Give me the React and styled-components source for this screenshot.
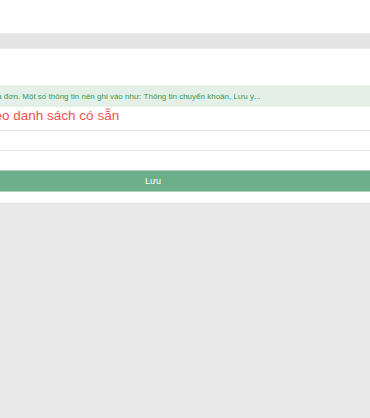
import styled, { createGlobalStyle } from 'styled-components'

const Global = createGlobalStyle`
  html, body { margin: 0; padding: 0; background: #e9e9e9; overflow: hidden; }
  body { font-family: "Liberation Sans", Arial, sans-serif; }
`

const Page = styled.div`display: flex; flex-direction: column; width: 100%; min-height: 418px;`,
  TopBar = styled.div`height: 33px; background: #fff;`,
  Gap = styled.div`height: 16px; background: #e3e3e3; border-top: 1px solid #ececec; border-bottom: 1px solid #ececec; box-sizing: border-box;`,
  Card = styled.div`background: #fff; margin-left: -96px; width: 498px; box-sizing: border-box; padding: 36px 16px 11px; display: flex; flex-direction: column; box-shadow: 0 1px 2px rgba(0,0,0,0.05);`,
  Note = styled.div`background: #e4efe8; color: #339a58; font-size: 8px; height: 22px; display: flex; align-items: center; padding-left: 13px; white-space: nowrap;`,
  Hint = styled.div`color: #f4504c; font-size: 13.5px; line-height: 17px; text-indent: -5px; white-space: nowrap;`,
  Input = styled.input`margin-top: 6px; height: 21px; border: 1px solid #e8e8ec; box-sizing: border-box; outline: none; background: #fff;`,
  Button = styled.button`margin-top: 19px; height: 22px; background: #6daf8a; border: 1px solid #a9d3bb; color: #fff; font-family: inherit; font-size: 9px; cursor: pointer;`

export default function App() {
  return (
    <Page>
      <Global />
      <TopBar />
      <Gap />
      <Card>
        <Note>Ghi chú in cuối hóa đơn. Một số thông tin nên ghi vào như: Thông tin chuyển khoản, Lưu ý...</Note>
        <Hint>Hoặc chọn theo danh sách có sẵn</Hint>
        <Input />
        <Button>Lưu</Button>
      </Card>
    </Page>
  )
}
